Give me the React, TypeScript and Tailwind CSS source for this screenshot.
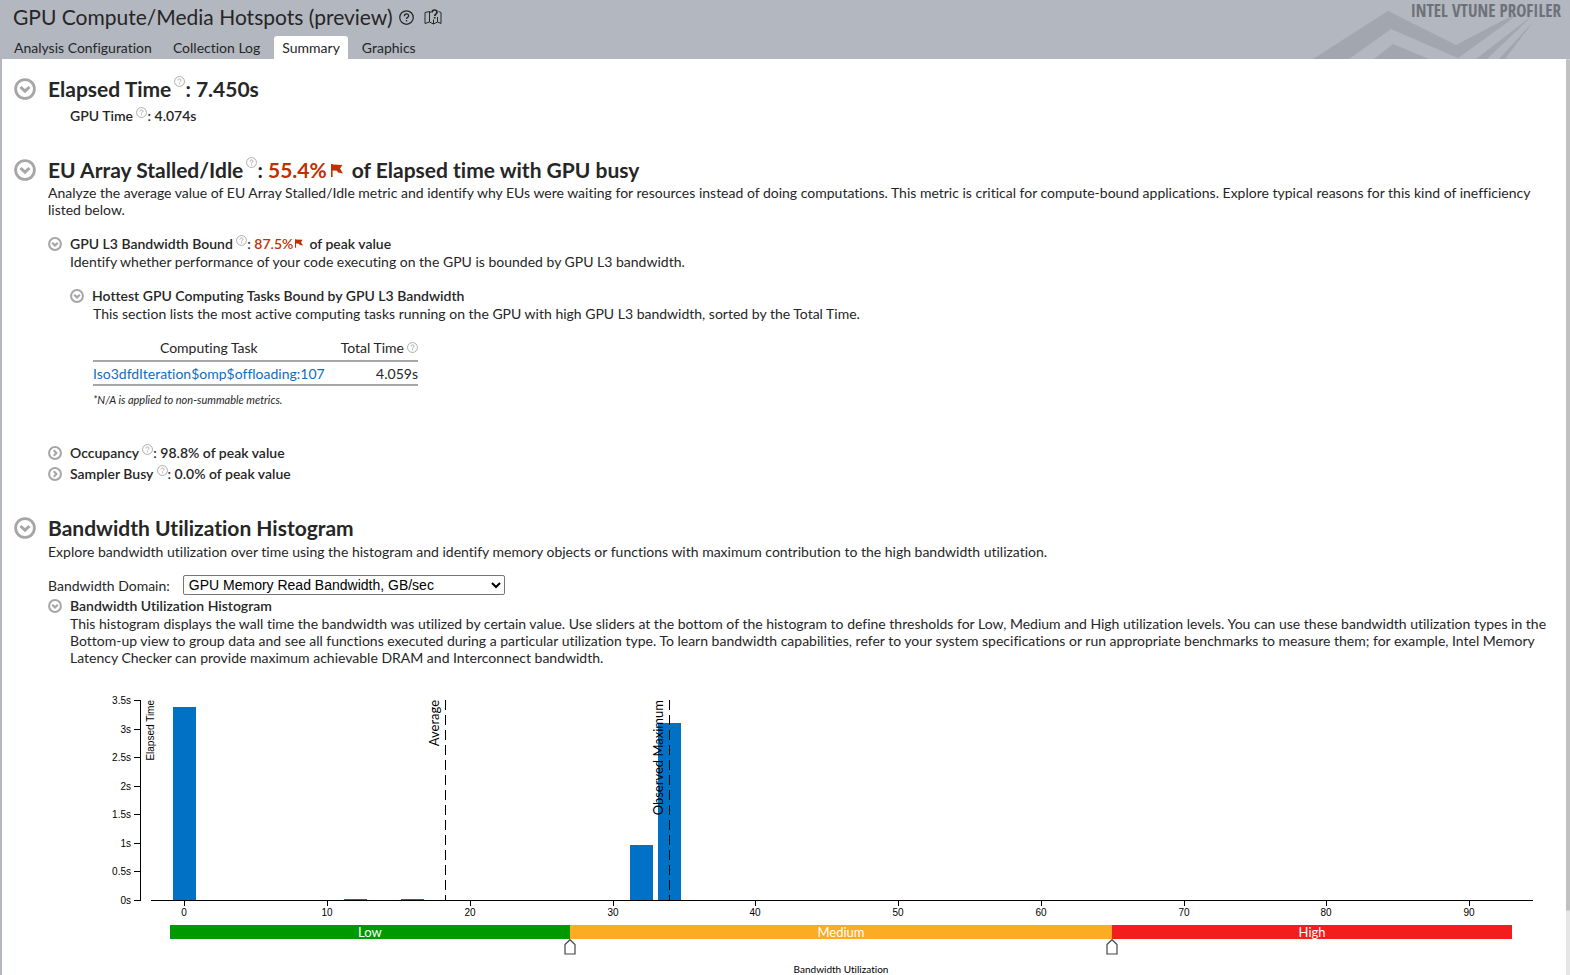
import { useState, type ReactNode } from "react";

const Y_TICKS = [
  { label: "3.5s", value: 3.5 },
  { label: "3s", value: 3 },
  { label: "2.5s", value: 2.5 },
  { label: "2s", value: 2 },
  { label: "1.5s", value: 1.5 },
  { label: "1s", value: 1 },
  { label: "0.5s", value: 0.5 },
  { label: "0s", value: 0 },
];
const X_TICKS = [0, 10, 20, 30, 40, 50, 60, 70, 80, 90];
const BARS = [
  { at: 0, time: 3.37 },
  { at: 12, time: 0.02 },
  { at: 16, time: 0.02 },
  { at: 32, time: 0.97 },
  { at: 34, time: 3.1 },
];
const MIN = -1;
const MAX = 93;

/* Chart coordinates: the first unit (-1) sits at x = 65. */
const xAt = (v: number) => 65 + ((v - MIN) * 1342) / (MAX - MIN);
const yAt = (s: number) => Math.round(204 - (s * 200) / 3.5);

function Help({ className }: { className: string }) {
  return (
    <button type="button" aria-label="Help" className={className}>
      <svg viewBox="0 0 12 12" className="block size-full" fill="none" stroke="currentColor">
        <circle cx="6" cy="6" r="5.4" strokeWidth="1" />
        <path d="M4.3 4.9c0-1 .7-1.7 1.7-1.7s1.7.6 1.7 1.5c0 1.2-1.7 1.2-1.7 2.4" strokeWidth="1" />
        <path d="M6 8v1.1" strokeWidth="1.1" />
      </svg>
    </button>
  );
}

function Toggle({ open, size, label }: { open: boolean; size: "lg" | "sm"; label: string }) {
  const large = size === "lg";
  return (
    <button
      type="button"
      aria-label={label}
      aria-expanded={open}
      className={large ? "size-[22px] shrink-0 text-[#a6a6a6]" : "size-[14px] shrink-0 text-[#a6a6a6]"}
    >
      <svg viewBox="0 0 22 22" className="block size-full" fill="none" stroke="currentColor">
        <circle cx="11" cy="11" r={large ? 9.4 : 9.3} strokeWidth={large ? 2.8 : 3.2} />
        <path d={open ? "M6.5 9l4.5 4.2L15.5 9" : "M9 6.5l4.2 4.5L9 15.5"} strokeWidth={large ? 3 : 3.4} />
      </svg>
    </button>
  );
}

function Flag({ className }: { className: string }) {
  return (
    <svg viewBox="0 0 12 13" className={className} fill="#c03000" aria-hidden="true">
      <path d="M0 0h1.6v13H0zM1.6 .4L11.4 1 9 4.6 12 9.4 7 8.6 6 6.8 1.6 6.6z" />
    </svg>
  );
}

function Heading({ label, children }: { label: string; children: ReactNode }) {
  return (
    <div className="flex h-7 items-center gap-3">
      <Toggle open size="lg" label={label} />
      <h2 className="flex items-center text-[21px] leading-7 font-bold whitespace-pre">{children}</h2>
    </div>
  );
}

function SubHeading({ open = true, label, children }: { open?: boolean; label: string; children: ReactNode }) {
  return (
    <div className="flex h-[19px] items-center gap-2">
      <Toggle open={open} size="sm" label={label} />
      <h3 className="flex items-center font-semibold whitespace-pre">{children}</h3>
    </div>
  );
}

function Chart() {
  return (
    <svg viewBox="0 0 1440 226" className="block h-auto w-full" role="img" aria-label="Bandwidth utilization histogram">
      {BARS.map((b) => (
        <rect
          key={b.at}
          x={Math.floor(xAt(b.at)) - 11}
          y={yAt(b.time)}
          width="23"
          height={204 - yAt(b.time)}
          fill="#0071c5"
        />
      ))}
      <g stroke="#000" fill="none" shapeRendering="crispEdges">
        <path d="M35.5 4v201M46 204.5h1382" />
        {Y_TICKS.map((t) => (
          <path key={t.label} d={`M29 ${yAt(t.value) + 0.5}h7`} />
        ))}
        {X_TICKS.map((v) => (
          <path key={v} d={`M${Math.round(xAt(v)) + 0.5} 204v6`} />
        ))}
        <path d="M340.5 4v200M564.5 4v200" strokeDasharray="10 5" />
      </g>
      <g className="font-['Liberation_Sans',sans-serif] text-[10px]">
        {Y_TICKS.map((t) => (
          <text key={t.label} x="26" y={yAt(t.value) + 4} textAnchor="end">{t.label}</text>
        ))}
        {X_TICKS.map((v) => (
          <text key={v} x={Math.round(xAt(v))} y="220" textAnchor="middle">{v}</text>
        ))}
        <text transform="translate(49 4) rotate(-90)" textAnchor="end">Elapsed Time</text>
      </g>
      <g className="text-[13px]">
        <text transform="translate(334 4) rotate(-90)" textAnchor="end">Average</text>
        <text transform="translate(558 4) rotate(-90)" textAnchor="end">Observed Maximum</text>
      </g>
    </svg>
  );
}

function Thresholds() {
  const [medium, setMedium] = useState(27);
  const [high, setHigh] = useState(65);
  const zones = [
    { name: "Low", span: medium - MIN, color: "bg-[#009900]" },
    { name: "Medium", span: high - medium, color: "bg-[#fbac23]" },
    { name: "High", span: MAX - high, color: "bg-[#f31d1d]" },
  ];
  const handles = [
    { name: "Medium threshold", value: medium, set: setMedium },
    { name: "High threshold", value: high, set: setHigh },
  ];
  return (
    <div className="relative mt-[3px] mr-[33px] ml-[65px] h-[30px]">
      <div className="flex h-[14px] text-center text-[13px] leading-[14px] text-white">
        {zones.map((z) => (
          <div key={z.name} className={z.color} style={{ width: `${(z.span / (MAX - MIN)) * 100}%` }}>
            {z.name}
          </div>
        ))}
      </div>
      {handles.map((h) => (
        <label key={h.name} className="absolute top-[14px] -ml-[6px]" style={{ left: `${((h.value - MIN) / (MAX - MIN)) * 100}%` }}>
          <svg viewBox="0 0 12 16" className="block h-4 w-3" fill="#fff" stroke="#444">
            <path d="M1 5.5L6 0.7l5 4.8v9.5H1z" strokeWidth="1.2" />
          </svg>
          <input
            type="range"
            aria-label={h.name}
            min={MIN}
            max={MAX}
            value={h.value}
            onChange={(e) => h.set(Number(e.target.value))}
            className="absolute inset-0 m-0 size-full opacity-0"
          />
        </label>
      ))}
    </div>
  );
}

export default function App() {
  const tabs = ["Analysis Configuration", "Collection Log", "Summary", "Graphics"];
  return (
    <div className="flex h-screen flex-col overflow-hidden bg-[#b3b7c0] font-[Lato,sans-serif] text-[14px] leading-[17px] text-[#262626] [font-variant-ligatures:no-common-ligatures]">
      <header className="relative flex h-[59px] shrink-0 flex-col justify-between">
        <svg viewBox="0 0 300 59" className="absolute right-0 bottom-0 h-[59px] w-[300px]" fill="#a2a6ae" aria-hidden="true">
          <path d="M43 59L118 11l68 34 65-34-13 11-50 36-67-29L79 59z" />
          <path d="M104 59l19-15 36 15zM206 59l57-44-46 44zM229 59l34-37-28 37z" />
        </svg>
        <div className="absolute top-0 right-[9px] font-['Noto_Sans_ExtraCondensed','Open_Sans_Condensed','Roboto_Condensed','Liberation_Sans_Narrow','Liberation_Sans',sans-serif] text-[17px] leading-[22px] font-bold text-[#6d7178]">
          INTEL VTUNE PROFILER
        </div>
        <div className="relative flex h-[34px] items-center pl-[13px]">
          <h1 className="text-[21px] leading-7">GPU Compute/Media Hotspots (preview)</h1>
          <Help className="ml-[6px] size-[15px]" />
          <button type="button" aria-label="Documentation" className="ml-[10px] h-4 w-[18px]">
            <svg viewBox="0 0 18 16" className="block size-full" fill="none" stroke="currentColor">
              <path d="M7 3.5L5.5 2.5 1 3.5v11l4.5-1.5 4 2 4-2 3.5 1.5v-11l-2.5-1M5.5 2.5v10.5M9.5 10.5v4.500M13.5 8v5" strokeWidth="1" />
              <path d="M8 3.5c0-1.500 1-2.500 2.500-2.500S13 2 13 3.300c0 1.700-2.300 1.900-2.300 3.700M10.700 8V9.600" strokeWidth="1.7" />
            </svg>
          </button>
        </div>
        <nav className="relative flex h-[23px] gap-[7px] pl-[7px]">
          {tabs.map((t) => (
            <a
              key={t}
              href="#"
              className={
                t === "Summary"
                  ? "rounded-t-[3px] bg-white px-2 leading-[24px]"
                  : "px-[7px] leading-[24px]"
              }
            >
              {t}
            </a>
          ))}
        </nav>
      </header>

      <div className="flex min-h-0 flex-1 pl-[2px]">
        <main className="min-w-0 flex-1 overflow-hidden bg-white pl-3">
          <section className="pt-4">
            <Heading label="Elapsed Time">
              Elapsed Time <Help className="-mt-4 -ml-[2px] size-[11px] text-[#a6a6a6]" />: 7.450s
            </Heading>
            <p className="mt-[3px] flex h-[18px] items-center pl-[56px] font-semibold whitespace-pre">
              GPU Time <Help className="-mt-[6px] size-[11px] text-[#a6a6a6]" />: 4.074s
            </p>
          </section>

          <section className="pt-8">
            <Heading label="EU Array Stalled/Idle">
              EU Array Stalled/Idle <Help className="-mt-4 -ml-[2px] size-[11px] text-[#a6a6a6]" />:{" "}
              <span className="text-[#c03000]">55.4%</span>
              <Flag className="mr-[9px] ml-1 h-[13px] w-3" />
              of Elapsed time with GPU busy
            </Heading>
            <div className="pl-[34px]">
              <p className="pr-2">
                Analyze the average value of EU Array Stalled/Idle metric and identify why EUs were waiting for resources
                instead of doing computations. This metric is critical for compute-bound applications. Explore typical
                reasons for this kind of inefficiency listed below.
              </p>
              <div className="pt-4">
                <SubHeading label="GPU L3 Bandwidth Bound">
                  GPU L3 Bandwidth Bound <Help className="-mt-[6px] size-[11px] text-[#a6a6a6]" />:{" "}
                  <span className="text-[#c03000]">87.5%</span>
                  <Flag className="mr-[6px] ml-[2px] h-[9px] w-2" />
                  of peak value
                </SubHeading>
                <div className="pl-[22px]">
                  <p>Identify whether performance of your code executing on the GPU is bounded by GPU L3 bandwidth.</p>
                  <div className="pt-4">
                    <SubHeading label="Hottest tasks">Hottest GPU Computing Tasks Bound by GPU L3 Bandwidth</SubHeading>
                    <div className="pl-[23px]">
                      <p>
                        This section lists the most active computing tasks running on the GPU with high GPU L3 bandwidth,
                        sorted by the Total Time.
                      </p>
                      <table className="mt-[13px] border-collapse">
                        <thead>
                          <tr className="h-[26px] border-b-2 border-[#a6a6a6]">
                            <th className="font-normal">Computing Task</th>
                            <th className="pl-4 font-normal">
                              <span className="flex items-center gap-[3px]">
                                Total Time <Help className="size-[11px] text-[#a6a6a6]" />
                              </span>
                            </th>
                          </tr>
                        </thead>
                        <tbody>
                          <tr className="h-[24px] border-b-2 border-[#a6a6a6]">
                            <td>
                              <a href="#" className="text-[#0f6dc0]">Iso3dfdIteration$omp$offloading:107</a>
                            </td>
                            <td className="text-right">4.059s</td>
                          </tr>
                        </tbody>
                      </table>
                      <p className="mt-[5px] text-[11px] italic">*N/A is applied to non-summable metrics.</p>
                    </div>
                  </div>
                </div>
                <div className="flex flex-col gap-[2px] pt-[35px]">
                  <SubHeading open={false} label="Occupancy">
                    Occupancy <Help className="-mt-[6px] size-[11px] text-[#a6a6a6]" />: 98.8% of peak value
                  </SubHeading>
                  <SubHeading open={false} label="Sampler Busy">
                    Sampler Busy <Help className="-mt-[6px] size-[11px] text-[#a6a6a6]" />: 0.0% of peak value
                  </SubHeading>
                </div>
              </div>
            </div>
          </section>

          <section className="pt-[31px]">
            <Heading label="Bandwidth Utilization Histogram">Bandwidth Utilization Histogram</Heading>
            <div className="pl-[34px]">
              <p className="mt-px">
                Explore bandwidth utilization over time using the histogram and identify memory objects or functions with
                maximum contribution to the high bandwidth utilization.
              </p>
              <div className="mt-[15px] flex items-center gap-[13px]">
                <label htmlFor="domain">Bandwidth Domain:</label>
                <select
                  id="domain"
                  className="h-5 w-[322px] rounded-[2px] border border-[#767676] bg-white pl-[1px] font-['Liberation_Sans',sans-serif] text-[14px] leading-[17px] text-black"
                >
                  <option>GPU Memory Read Bandwidth, GB/sec</option>
                </select>
              </div>
              <div className="pt-px">
                <SubHeading label="Bandwidth histogram">Bandwidth Utilization Histogram</SubHeading>
                <p className="pr-2 pl-[22px]">
                  This histogram displays the wall time the bandwidth was utilized by certain value. Use sliders at the
                  bottom of the histogram to define thresholds for Low, Medium and High utilization levels. You can use
                  these bandwidth utilization types in the Bottom-up view to group data and see all functions executed
                  during a particular utilization type. To learn bandwidth capabilities, refer to your system
                  specifications or run appropriate benchmarks to measure them; for example, Intel Memory Latency Checker
                  can provide maximum achievable DRAM and Interconnect bandwidth.
                </p>
              </div>
            </div>
            <figure className="mt-[30px] mr-[21px] ml-[91px]">
              <Chart />
              <Thresholds />
              <figcaption className="mt-[6px] mr-[33px] ml-[65px] text-center text-[10px] text-black">
                Bandwidth Utilization
              </figcaption>
            </figure>
          </section>
        </main>
        <div className="w-1 shrink-0 bg-[#e6e6e6]" aria-hidden="true">
          <div className="h-[93%] rounded-[2px] bg-[#c1c1c1]" />
        </div>
      </div>
    </div>
  );
}
